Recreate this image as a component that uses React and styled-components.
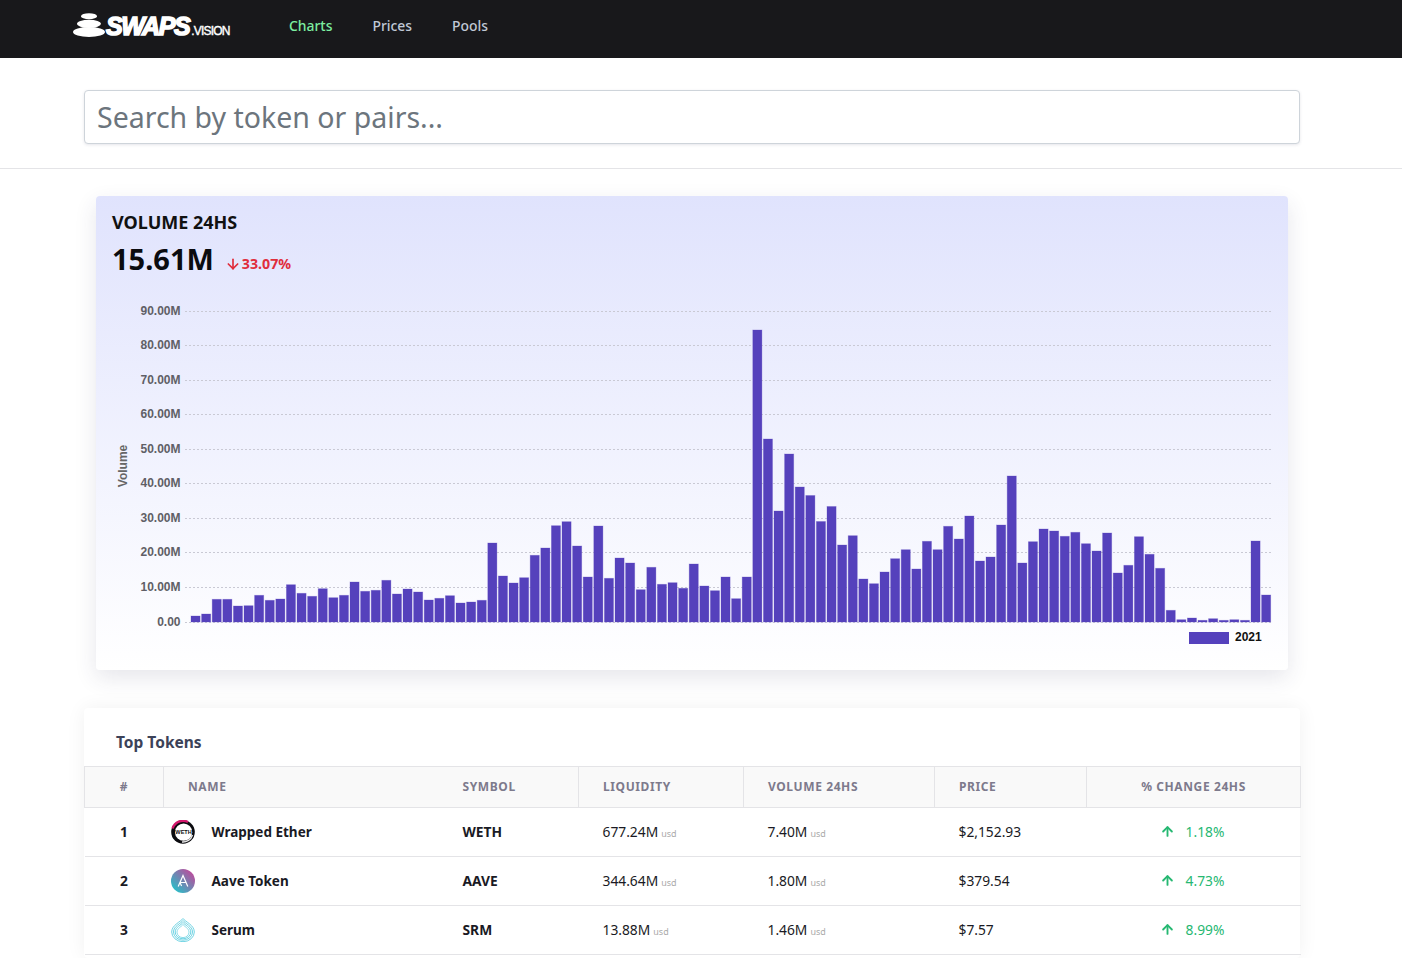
import styled, { createGlobalStyle } from 'styled-components'
import { ArrowDown, ArrowUp } from 'lucide-react'

const GlobalStyle = createGlobalStyle`
  html, body {
    margin: 0;
    height: 958px;
    overflow: hidden;
    background: #fff;
    font-family: 'Noto Sans', sans-serif;
  }
`

const NavBar = styled.nav`
  height: 58px;
  background-color: #18181b;
  display: flex;
  align-items: flex-start;
  padding-left: 73px;
`

const Logo = styled.div`
  width: 216px;
  height: 40px;
  display: flex;
  align-items: flex-start;
  padding-top: 13px;
`

const LogoWord = styled.span`
  font-family: 'Liberation Sans', sans-serif;
  font-style: italic;
  font-weight: 700;
  font-size: 25px;
  line-height: 27px;
  letter-spacing: -1.4px;
  color: #fff;
  -webkit-text-stroke: 1.6px #fff;
  margin-left: 1px;
`

const LogoSuffix = styled.span`
  font-family: 'Liberation Sans', sans-serif;
  font-size: 12px;
  line-height: 14px;
  letter-spacing: -0.8px;
  color: #fff;
  margin-top: 11px;
  margin-left: 2px;
  -webkit-text-stroke: 0.4px #fff;
`

const NavLinks = styled.div`
  display: flex;
  gap: 40px;
`

const NavLink = styled.a`
  font-size: 13.9px;
  line-height: 52px;
  font-weight: 500;
  color: ${(p) => (p.$active ? '#7deea0' : '#c0c8d6')};
`

const SearchSection = styled.div`
  padding: 32px 102px 24px 84px;
  border-bottom: 1px solid #e4e4e7;
`

const SearchInput = styled.input`
  display: block;
  box-sizing: border-box;
  width: 100%;
  height: 54px;
  padding: 0 12px 1px;
  font-family: inherit;
  font-size: 28.5px;
  color: #495057;
  background: #fff;
  border: 1px solid #ced4da;
  border-radius: 4px;
  box-shadow: 0 1px 3px rgba(50, 50, 93, 0.12);
  outline: none;

  &::placeholder {
    color: #6c757d;
    opacity: 1;
  }
`

const ChartCard = styled.section`
  box-sizing: border-box;
  width: 1192px;
  height: 474px;
  margin: 27px 0 0 96px;
  padding: 13px 16px 0;
  border-radius: 4px;
  background: linear-gradient(180deg, #e0e3fd 0%, #ffffff 100%);
  box-shadow: 0 8px 22px rgba(50, 50, 93, 0.12);
`

const ChartTitle = styled.h2`
  margin: 0;
  font-size: 18px;
  line-height: 26px;
  font-weight: 700;
  color: #111;
`

const ChartFigures = styled.div`
  display: flex;
  align-items: flex-end;
  margin-top: 4px;
`

const BigNumber = styled.span`
  font-size: 29px;
  line-height: 40px;
  font-weight: 700;
  color: #0b0b0f;
`

const Delta = styled.span`
  display: flex;
  align-items: center;
  gap: 1px;
  margin: 0 0 5px 11px;
  font-size: 14.2px;
  line-height: 20px;
  font-weight: 700;
  color: #e02d3c;
`

const ChartSvg = styled.svg`
  display: block;
  margin: 8px 0 0 -16px;
`

const TableCard = styled.section`
  margin: 38px 102px 0 84px;
  height: 250px;
  background: #fff;
  box-shadow: 0 0 20px rgba(0, 0, 0, 0.06);
  border-radius: 4px;
`

const TableTitle = styled.h3`
  margin: 0;
  padding: 20px 32px 10px;
  font-size: 15.5px;
  line-height: 28px;
  font-weight: 700;
  color: #3c4258;
`

const Table = styled.table`
  width: 100%;
  table-layout: fixed;
  border-collapse: collapse;
`

const HeadCell = styled.th`
  height: 38px;
  padding: 0 24px 2px ${(p) => (p.$noLeft ? '25px' : '24px')};
  background: #f9f9f9;
  border-top: 1px solid #e4e4e7;
  border-bottom: 1px solid #e4e4e7;
  border-left: ${(p) => (p.$noLeft ? 'none' : '1px solid #e4e4e7')};
  border-right: ${(p) => (p.$noRight ? 'none' : '1px solid #e4e4e7')};
  font-size: 12px;
  font-weight: 700;
  letter-spacing: 0.6px;
  text-transform: uppercase;
  text-align: ${(p) => p.$align || 'left'};
  color: #7d7a8c;
`

const Row = styled.tr`
  height: 49px;
  border-bottom: 1px solid #e4e4e7;
`

const Cell = styled.td`
  padding: 0 24px 2px;
  font-size: 13.8px;
  color: #1a1a24;
  text-align: ${(p) => p.$align || 'left'};
  font-weight: ${(p) => (p.$bold ? 700 : 400)};
`

const SymbolCell = styled(Cell)`
  padding-left: 25px;
  font-weight: 700;
`

const NameCell = styled(Cell)`
  padding: 0 24px 0 7px;
  font-size: 13.5px;
  font-weight: 700;
`

const NameWrap = styled.div`
  display: flex;
  align-items: center;
  gap: 17px;
`

const Usd = styled.small`
  margin-left: 3px;
  font-size: 9px;
  color: #aaa;
`

const ChangeCell = styled(Cell)`
  padding-bottom: 0;
`

const Change = styled.span`
  display: inline-flex;
  align-items: center;
  gap: 11px;
  margin-left: -3px;
  color: #26b872;
`

const bars = [
  6, 8, 22.7, 22.7, 16, 16.3, 26.7, 21.7, 23, 37.3, 28.7, 25.7, 33.3, 24.3, 26.7, 40, 30.7, 31.7, 41.7, 28,
  33, 30, 22, 23.7, 26.3, 19, 20, 21.7, 79, 46, 39, 44.3, 66.7, 74, 96.3, 100.3, 76, 45, 96, 43.7,
  64, 59, 32.3, 54.7, 37.7, 39.3, 33.7, 58, 36, 31.3, 45, 23.3, 45, 292, 183, 111, 168, 135, 126.5, 100.5,
  115.5, 77, 86.3, 43, 38.3, 50, 63.3, 72.3, 53, 80.7, 72.3, 95.7, 83, 106, 61, 65, 97, 146, 59, 80.3,
  93, 91, 85.7, 89.7, 78.3, 71, 89, 49, 56.7, 85.3, 67.7, 53.7, 11.7, 2.3, 4, 1.7, 3.3, 1.7, 2.3, 1.7,
  81, 27,
]

const ticks = ['0.00', '10.00M', '20.00M', '30.00M', '40.00M', '50.00M', '60.00M', '70.00M', '80.00M', '90.00M']

const tokens = [
  { rank: 1, name: 'Wrapped Ether', symbol: 'WETH', liquidity: '677.24M', volume: '7.40M', price: '$2,152.93', change: '1.18%', icon: 'weth' },
  { rank: 2, name: 'Aave Token', symbol: 'AAVE', liquidity: '344.64M', volume: '1.80M', price: '$379.54', change: '4.73%', icon: 'aave' },
  { rank: 3, name: 'Serum', symbol: 'SRM', liquidity: '13.88M', volume: '1.46M', price: '$7.57', change: '8.99%', icon: 'srm' },
]

// chart coordinates are relative to the card's left edge
const CHART_TOP = 24
const BASELINE = CHART_TOP + 311
const STEP = 34.55

function VolumeChart() {
  return (
    <ChartSvg width="1192" height="365" fontFamily="'Liberation Sans', sans-serif">
      {ticks.map((tick, i) => {
        const y = Math.floor(BASELINE - i * STEP) + 0.5
        return (
          <g key={tick}>
            <line x1="89" x2="1175" y1={y} y2={y} stroke="#c9c9d4" strokeDasharray="2 2" />
            <text x="84.5" y={y + 3} textAnchor="end" fontSize="12" fontWeight="700" fill="#5f5f66">
              {tick}
            </text>
          </g>
        )
      })}
      <text
        transform={`translate(31 ${CHART_TOP + 155}) rotate(-90)`}
        textAnchor="middle"
        fontSize="12"
        fontWeight="700"
        fill="#666"
      >
        Volume
      </text>
      {bars.map((h, i) => (
        <rect
          key={i}
          x={95 + i * 10.6}
          y={BASELINE - h}
          width="9.1"
          height={h}
          fill="#5541bc"
          stroke="#5541bc"
          strokeOpacity="0.35"
          strokeWidth="0.8"
        />
      ))}
      <rect x="1093" y={BASELINE + 10} width="40" height="12" fill="#5541bc" />
      <text x="1139" y={BASELINE + 19} fontSize="12" fontWeight="700" fill="#111">
        2021
      </text>
    </ChartSvg>
  )
}

function TokenIcon({ type }) {
  if (type === 'weth') {
    return (
      <svg width="24" height="24" viewBox="0 0 24 24">
        <circle cx="12" cy="12" r="11.8" fill="#0b0b0f" />
        <path d="M1.6 8.5 A11 11 0 0 1 17 2" fill="none" stroke="#d3166b" strokeWidth="2.4" />
        <path d="M11 22 A10 10 0 0 0 21.5 15" fill="none" stroke="#e8e8e8" strokeWidth="1.4" />
        <circle cx="12.6" cy="12.2" r="8.6" fill="#fff" />
        <text x="12.6" y="14.2" textAnchor="middle" fontSize="5.6" fontWeight="700" fontFamily="'Liberation Sans', sans-serif" fill="#111">
          WETH
        </text>
      </svg>
    )
  }
  if (type === 'aave') {
    return (
      <svg width="24" height="24" viewBox="0 0 24 24">
        <defs>
          <linearGradient id="aaveGrad" x1="1" y1="0" x2="0" y2="1">
            <stop offset="0.15" stopColor="#b6509e" />
            <stop offset="0.85" stopColor="#2ebac6" />
          </linearGradient>
        </defs>
        <circle cx="12" cy="12" r="12" fill="url(#aaveGrad)" />
        <path d="M7.2 17.5 L12 6.5 L16.8 17.5 M9.2 14 L10.6 17 M9.2 13.5 H14.5" fill="none" stroke="#fff" strokeWidth="1.2" />
      </svg>
    )
  }
  return (
    <svg width="24" height="24" viewBox="0 0 24 24" fill="none" stroke="#6fd3e3" strokeWidth="1">
      <path d="M12 0.5 C9.5 4 0.7 7 0.7 14 A11.3 9.7 0 0 0 23.3 14 C23.3 7 14.5 4 12 0.5Z" />
      <path d="M12 2.5 C10 5.5 2.5 8 2.5 14 A9.5 8.2 0 0 0 21.5 14 C21.5 8 14 5.5 12 2.5Z" />
      <path d="M12 4.5 C10.5 7 4.2 9 4.2 14 A7.8 6.8 0 0 0 19.8 14 C19.8 9 13.5 7 12 4.5Z" />
      <path d="M12 6.5 C11 8.5 6 10 6 14.2 A6 5.4 0 0 0 18 14.2 C18 10 13 8.5 12 6.5Z" strokeWidth="0.8" />
    </svg>
  )
}

function StoneLogo() {
  return (
    <svg width="32" height="26" viewBox="0 0 32 26" fill="#fff">
      <ellipse cx="16" cy="3.2" rx="8" ry="3" />
      <ellipse cx="16" cy="10.8" rx="12" ry="4" />
      <ellipse cx="16" cy="19" rx="16" ry="5" />
    </svg>
  )
}

export default function App() {
  return (
    <>
      <GlobalStyle />
      <NavBar>
        <Logo>
          <StoneLogo />
          <LogoWord>SWAPS</LogoWord>
          <LogoSuffix>.VISION</LogoSuffix>
        </Logo>
        <NavLinks>
          <NavLink $active>Charts</NavLink>
          <NavLink>Prices</NavLink>
          <NavLink>Pools</NavLink>
        </NavLinks>
      </NavBar>
      <SearchSection>
        <SearchInput placeholder="Search by token or pairs..." />
      </SearchSection>
      <ChartCard>
        <ChartTitle>VOLUME 24HS</ChartTitle>
        <ChartFigures>
          <BigNumber>15.61M</BigNumber>
          <Delta>
            <ArrowDown size={16} strokeWidth={2.5} />
            33.07%
          </Delta>
        </ChartFigures>
        <VolumeChart />
      </ChartCard>
      <TableCard>
        <TableTitle>Top Tokens</TableTitle>
        <Table>
          <colgroup>
            <col style={{ width: 79 }} />
            <col style={{ width: 274 }} />
            <col style={{ width: 141 }} />
            <col style={{ width: 165 }} />
            <col style={{ width: 191 }} />
            <col style={{ width: 152 }} />
            <col style={{ width: 214 }} />
          </colgroup>
          <thead>
            <tr>
              <HeadCell $align="center">#</HeadCell>
              <HeadCell $noRight>Name</HeadCell>
              <HeadCell $noLeft>Symbol</HeadCell>
              <HeadCell>Liquidity</HeadCell>
              <HeadCell>Volume 24hs</HeadCell>
              <HeadCell>Price</HeadCell>
              <HeadCell $align="center">% Change 24hs</HeadCell>
            </tr>
          </thead>
          <tbody>
            {tokens.map((token) => (
              <Row key={token.rank}>
                <Cell $bold $align="center">{token.rank}</Cell>
                <NameCell>
                  <NameWrap>
                    <TokenIcon type={token.icon} />
                    {token.name}
                  </NameWrap>
                </NameCell>
                <SymbolCell>{token.symbol}</SymbolCell>
                <Cell>{token.liquidity}<Usd>usd</Usd></Cell>
                <Cell>{token.volume}<Usd>usd</Usd></Cell>
                <Cell>{token.price}</Cell>
                <ChangeCell $align="center">
                  <Change>
                    <ArrowUp size={15} strokeWidth={3} />
                    {token.change}
                  </Change>
                </ChangeCell>
              </Row>
            ))}
          </tbody>
        </Table>
      </TableCard>
    </>
  )
}
